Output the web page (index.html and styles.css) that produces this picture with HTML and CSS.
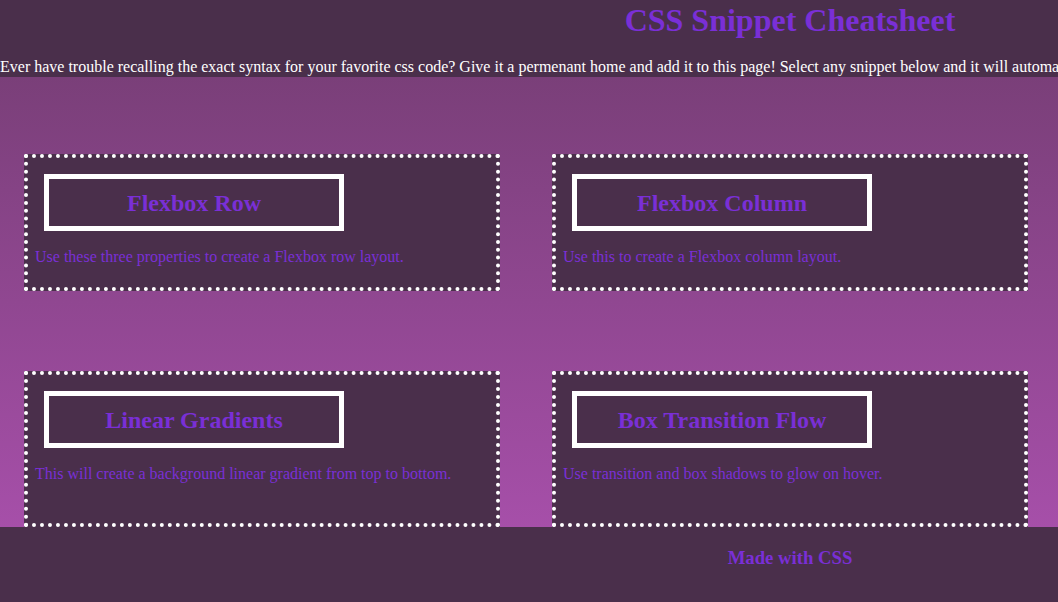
FILE: index.html
```html
<!DOCTYPE html>
<html>
<head>
<meta charset="utf-8">
<link rel="stylesheet" href="styles.css">
</head>
<body>
<header class="site-header">
  <h1 class="site-title">CSS Snippet Cheatsheet</h1>
  <p class="intro">Ever have trouble recalling the exact syntax for your favorite css code? Give it a permenant home and add it to this page! Select any snippet below and it will automatically copy to your clipboard.</p>
</header>
<main class="snippets">
  <section class="card">
    <h2 class="card-title">Flexbox Row</h2>
    <p class="card-desc">Use these three properties to create a Flexbox row layout.</p>
  </section>
  <section class="card">
    <h2 class="card-title">Flexbox Column</h2>
    <p class="card-desc">Use this to create a Flexbox column layout.</p>
  </section>
  <section class="card">
    <h2 class="card-title">Linear Gradients</h2>
    <p class="card-desc">This will create a background linear gradient from top to bottom.</p>
  </section>
  <section class="card">
    <h2 class="card-title">Box Transition Flow</h2>
    <p class="card-desc">Use transition and box shadows to glow on hover.</p>
  </section>
</main>
<footer class="site-footer">
  <h3 class="footer-text">Made with CSS</h3>
</footer>
</body>
</html>
```
FILE: styles.css
```css
html, body {
  margin: 0;
  padding: 0;
}
body {
  font-family: "Liberation Serif", "Times New Roman", serif;
  background: linear-gradient(to bottom, #7a3f79 0px, #7a3f79 77px, #a64fa9 527px);
  overflow: hidden;
  height: 602px;
}
.site-header {
  background: #4a2f4b;
  height: 77px;
  overflow: hidden;
}
.site-title {
  margin: 0;
  padding: 2px 0 0 522px;
  text-align: center;
  font-size: 32px;
  font-weight: bold;
  color: #7a2fd6;
  line-height: 37px;
}
.intro {
  margin: 19px 0 0 0;
  white-space: nowrap;
  color: #ffffff;
  font-size: 16px;
  line-height: 18px;
}
.snippets {
  display: grid;
  grid-template-columns: 476px 476px;
  grid-template-rows: 137px 156px;
  column-gap: 52px;
  row-gap: 80px;
  padding: 77px 0 0 24px;
}
.card {
  box-sizing: border-box;
  border: 4px dotted #ffffff;
  background: #4a2f4b;
  padding: 16px 0 0 7px;
  display: flex;
  flex-direction: column;
}
.card-title {
  box-sizing: border-box;
  margin: 0 0 0 9px;
  width: 300px;
  height: 57px;
  border: 5px solid #ffffff;
  padding-top: 2px;
  display: flex;
  align-items: center;
  justify-content: center;
  font-size: 24px;
  font-weight: bold;
  color: #7a2fd6;
}
.card-desc {
  margin: 17px 0 0 0;
  font-size: 16px;
  line-height: 18px;
  color: #7a2fd6;
}
.site-footer {
  background: #4a2f4b;
  height: 75px;
}
.footer-text {
  margin: 0;
  padding: 20px 0 0 522px;
  text-align: center;
  font-size: 18.72px;
  font-weight: bold;
  color: #7a2fd6;
  line-height: 21px;
}
```
